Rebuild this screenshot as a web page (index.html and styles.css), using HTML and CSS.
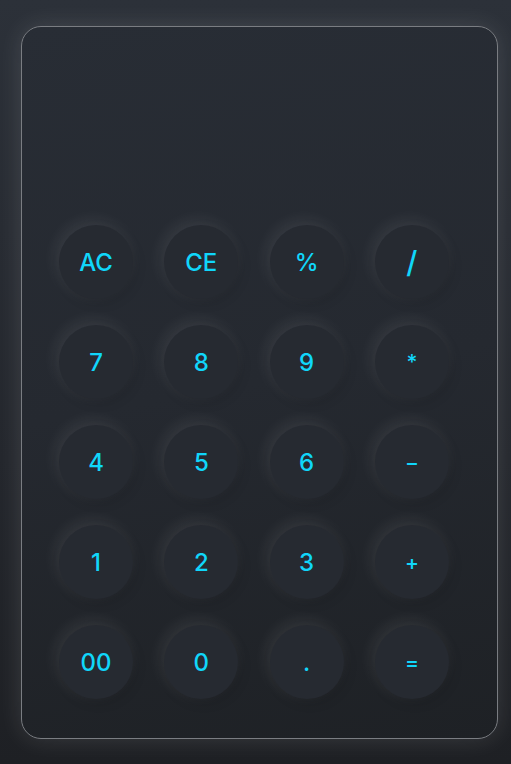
FILE: index.html
```html
<!DOCTYPE html>
<html>
<head>
<meta charset="utf-8">
<link rel="stylesheet" href="styles.css">
</head>
<body>
<div class="calc">
  <div class="display"></div>
  <div class="keys">
    <button class="key">AC</button>
    <button class="key">CE</button>
    <button class="key">%</button>
    <button class="key op slash">/</button>
    <button class="key">7</button>
    <button class="key">8</button>
    <button class="key">9</button>
    <button class="key op">*</button>
    <button class="key">4</button>
    <button class="key">5</button>
    <button class="key">6</button>
    <button class="key op">−</button>
    <button class="key">1</button>
    <button class="key">2</button>
    <button class="key">3</button>
    <button class="key op">+</button>
    <button class="key">00</button>
    <button class="key">0</button>
    <button class="key">.</button>
    <button class="key op">=</button>
  </div>
</div>
</body>
</html>
```
FILE: styles.css
```css
html, body {
  margin: 0;
  padding: 0;
}
body {
  width: 511px;
  height: 764px;
  background: linear-gradient(180deg, #2c3139 0%, #24272d 60%, #1e2024 100%);
  font-family: Inter, "Open Sans", sans-serif;
  padding: 26px 0 0 21px;
  box-sizing: border-box;
  overflow: hidden;
}
.calc {
  width: 477px;
  height: 713px;
  box-sizing: border-box;
  border: 1px solid #7a7d82;
  border-radius: 20px;
  background: linear-gradient(170deg, #282d35 0%, #252930 50%, #1e2125 100%);
  box-shadow: 0 0 24px rgba(255, 255, 255, 0.12);
  padding: 198px 47px 0 37px;
  display: flex;
  flex-direction: column;
}
.display {
  display: none;
}
.keys {
  display: grid;
  grid-template-columns: repeat(4, 74px);
  column-gap: 31.3px;
  row-gap: 26px;
}
.key {
  width: 74px;
  height: 74px;
  border-radius: 50%;
  border: none;
  background: #262a31;
  color: #10d6fa;
  font-family: Inter, "Open Sans", sans-serif;
  font-size: 24px;
  font-weight: 500;
  padding: 0;
  display: flex;
  align-items: center;
  justify-content: center;
  box-shadow: -3px -4px 16px rgba(255, 255, 255, 0.09), 3px 4px 12px rgba(0, 0, 0, 0.12);
}
.op {
  font-size: 21px;
}
.slash {
  font-size: 30px;
}
```
